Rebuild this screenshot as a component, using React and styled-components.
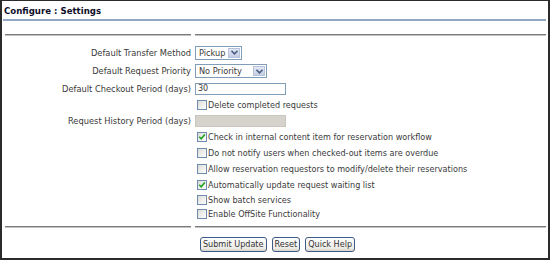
import React from 'react';
import styled, {createGlobalStyle} from 'styled-components';

const GlobalStyle = createGlobalStyle`
    html, body {
        margin: 0;
        padding: 0;
        background: #ffffff;
    }
    body {
        font-family: 'DejaVu Sans', 'Liberation Sans', sans-serif;
    }
`

const rows = [
    {label: 'Default Transfer Method', kind: 'select', value: 'Pickup', width: 47, h: 19},
    {label: 'Default Request Priority', kind: 'select', value: 'No Priority', width: 72, h: 18},
    {label: 'Default Checkout Period (days)', kind: 'input', value: '30', h: 17},
    {kind: 'check', text: 'Delete completed requests', h: 16},
    {label: 'Request History Period (days)', kind: 'input', disabled: true, h: 16},
    {kind: 'check', text: 'Check in internal content item for reservation workflow', checked: true, h: 16},
    {kind: 'check', text: 'Do not notify users when checked-out items are overdue', h: 16},
    {kind: 'check', text: 'Allow reservation requestors to modify/delete their reservations', h: 16},
    {kind: 'check', text: 'Automatically update request waiting list', checked: true, h: 15},
    {kind: 'check', text: 'Show batch services', h: 15},
    {kind: 'check', text: 'Enable OffSite Functionality', h: 14},
]

const Control = ({row}) => {
    if (row.kind === 'select'){
        return (
            <SelectBox style={{width: row.width}}>
                <SelectText>{row.value}</SelectText>
                <ArrowButton>
                    <svg width="7" height="5" viewBox="0 0 7 5">
                        <path d="M0.5 0.8 L3.5 3.8 L6.5 0.8" fill="none" stroke="#4d6185" strokeWidth="1.6"/>
                    </svg>
                </ArrowButton>
            </SelectBox>
        )
    }
    if (row.kind === 'input'){
        return <TextBox disabled={row.disabled}>{row.value}</TextBox>
    }
    return (
        <CheckLine>
            <CheckBox>
                {row.checked ?
                <svg width="8" height="8" viewBox="0 0 8 8">
                    <path d="M1.2 3.8 L3.2 5.8 L6.8 1.6" fill="none" stroke="#21a121" strokeWidth="1.6"/>
                </svg> : null}
            </CheckBox>
            <CheckText>{row.text}</CheckText>
        </CheckLine>
    )
}

const App = () => {
    return (
        <>
            <GlobalStyle/>
            <Frame>
                <Title>Configure : Settings</Title>
                <BlueRule/>
                <Form>
                    <RuleRow>
                        <Rule/>
                        <Rule/>
                    </RuleRow>
                    <Spacer h={7}/>
                    {rows.map((row, i) =>
                        <Row key={i} h={row.h}>
                            <Label>{row.label}</Label>
                            <Cell><Control row={row}/></Cell>
                        </Row>
                    )}
                    <Spacer h={5}/>
                    <RuleRow>
                        <Rule/>
                        <Rule/>
                    </RuleRow>
                    <Buttons>
                        <Button>Submit Update</Button>
                        <Button>Reset</Button>
                        <Button>Quick Help</Button>
                    </Buttons>
                </Form>
            </Frame>
        </>
    )
}

const Frame = styled.div`
    box-sizing: border-box;
    width: 550px;
    height: 260px;
    border: 2px solid #2b2b2b;
    border-top-width: 1px;
    padding: 2px 2px 0 1px;
    color: #3a3a3a;
`

const Title = styled.div`
    height: 16px;
    line-height: 16px;
    font-size: 8.6px;
    font-weight: bold;
    color: #0e0e2a;
    padding-left: 1px;
`

const BlueRule = styled.div`
    height: 2px;
    background: #93a8c4;
`

const Form = styled.div`
    padding: 13px 0 0 2px;
`

const RuleRow = styled.div`
    display: grid;
    grid-template-columns: 186px 1fr;
    column-gap: 4px;
`

const Rule = styled.div`
    height: 1px;
    background: #7a7a7a;
    border-bottom: 1px solid #c4c4c4;
`

const Spacer = styled.div`
    height: ${p => p.h}px;
`

const Row = styled.div`
    display: grid;
    grid-template-columns: 186px 1fr;
    column-gap: 4px;
    align-items: center;
    height: ${p => p.h}px;
`

const Label = styled.div`
    text-align: right;
    font-size: 8.3px;
    white-space: nowrap;
`

const Cell = styled.div`
    display: flex;
    align-items: center;
`

const SelectBox = styled.div`
    box-sizing: border-box;
    height: 14px;
    display: flex;
    align-items: center;
    justify-content: space-between;
    border: 1px solid #7f9db9;
    background: #fff;
    padding: 1px;
`

const SelectText = styled.span`
    font-size: 8.2px;
    padding-left: 2px;
    white-space: nowrap;
`

const ArrowButton = styled.span`
    box-sizing: border-box;
    width: 12px;
    height: 10px;
    flex-shrink: 0;
    display: flex;
    align-items: center;
    justify-content: center;
    background: linear-gradient(#e3e8f4, #c3cde3);
    border: 1px solid #b7c3da;
`

const TextBox = styled.div`
    box-sizing: border-box;
    width: 91px;
    height: 12px;
    line-height: 10px;
    border: 1px solid ${p => p.disabled ? '#c9c6be' : '#7f9db9'};
    background: ${p => p.disabled ? '#d6d3cc' : '#fff'};
    font-size: 8px;
    padding-left: 2px;
`

const CheckLine = styled.div`
    display: flex;
    align-items: center;
    padding-left: 2px;
`

const CheckBox = styled.span`
    box-sizing: border-box;
    width: 10px;
    height: 10px;
    flex-shrink: 0;
    border: 1px solid #6f8bb0;
    background: linear-gradient(135deg, #dcdcd6, #ffffff);
    display: flex;
    align-items: center;
    justify-content: center;
    margin-right: 1px;
`

const CheckText = styled.span`
    font-size: 8.1px;
    white-space: nowrap;
`

const Buttons = styled.div`
    display: flex;
    justify-content: center;
    gap: 5px;
    padding: 9px 0 0 4px;
`

const Button = styled.button`
    box-sizing: border-box;
    height: 15px;
    padding: 0 2px;
    border: 1px solid #3d5b84;
    border-radius: 3px;
    background: linear-gradient(#ffffff, #ecebe6 80%, #d6d0c5);
    font-family: 'DejaVu Sans', 'Liberation Sans', sans-serif;
    font-size: 8.1px;
    color: #333;
    line-height: 13px;
`

export default App;
